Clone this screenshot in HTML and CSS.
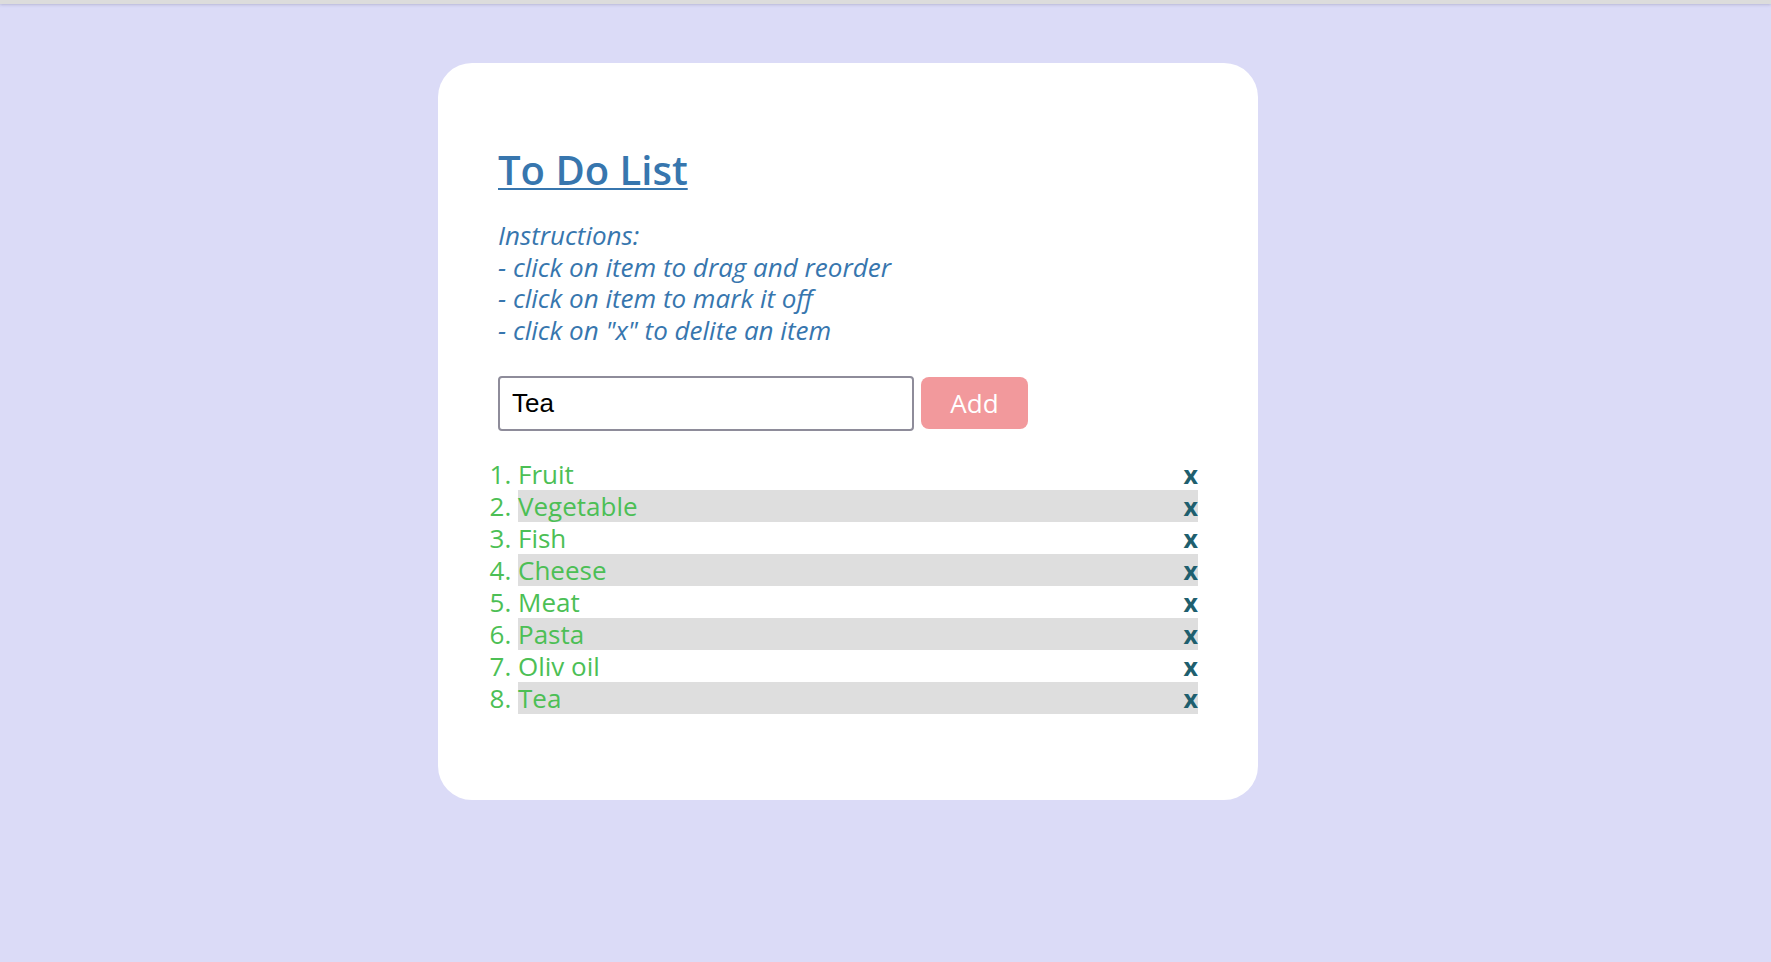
FILE: index.html
```html
<!DOCTYPE html>
<html lang="en">
<head>
<meta charset="utf-8">
<title>To Do List</title>
<link rel="stylesheet" href="styles.css">
</head>
<body>
<div class="topbar"></div>
<main class="card">
  <h1 class="title">To Do List</h1>
  <p class="instructions">Instructions:<br>- click on item to drag and reorder<br>- click on item to mark it off<br>- click on "x" to delite an item</p>
  <form class="add-form">
    <input class="add-input" type="text" value="Tea">
    <button class="add-btn" type="button">Add</button>
  </form>
  <ol class="todo">
    <li class="item">Fruit<span class="del">x</span></li>
    <li class="item">Vegetable<span class="del">x</span></li>
    <li class="item">Fish<span class="del">x</span></li>
    <li class="item">Cheese<span class="del">x</span></li>
    <li class="item">Meat<span class="del">x</span></li>
    <li class="item">Pasta<span class="del">x</span></li>
    <li class="item">Oliv oil<span class="del">x</span></li>
    <li class="item">Tea<span class="del">x</span></li>
  </ol>
</main>
</body>
</html>
```

FILE: styles.css
```css
html, body {
  margin: 0;
  padding: 0;
}
body {
  background: #dbdbf7;
  font-family: "Open Sans", "Liberation Sans", sans-serif;
  min-height: 962px;
}
.topbar {
  height: 4px;
  background: #dcdcdc;
  box-shadow: 0 1px 3px rgba(80, 80, 120, 0.25);
}
.card {
  box-sizing: border-box;
  width: 820px;
  margin: 59px 0 0 438px;
  padding: 81px 60px 86px 60px;
  background: #ffffff;
  border-radius: 34px;
}
.title {
  margin: 0;
  font-size: 40px;
  font-weight: 600;
  line-height: 52px;
  color: #3776ae;
  text-decoration: underline;
  text-decoration-thickness: 2px;
  text-underline-offset: 3px;
}
.instructions {
  margin: 24px 0 0 0;
  font-size: 26px;
  font-style: italic;
  font-weight: 500;
  line-height: 31.7px;
  color: #3776ae;
}
.add-form {
  display: flex;
  align-items: center;
  gap: 7px;
  margin-top: 29px;
}
.add-input {
  box-sizing: border-box;
  width: 416px;
  height: 55px;
  margin: 0;
  padding: 0 12px;
  border: 2px solid #8e8c9a;
  border-radius: 4px;
  font-family: "Liberation Sans", Arial, sans-serif;
  font-size: 26px;
  color: #000;
  outline: none;
}
.add-btn {
  box-sizing: border-box;
  width: 107px;
  height: 52px;
  margin: 0;
  padding: 0;
  border: none;
  border-radius: 8px;
  background: #f2999c;
  color: #ffffff;
  font-family: "Open Sans", sans-serif;
  font-size: 26px;
  font-weight: 500;
}
.todo {
  margin: 27px 0 0 0;
  padding: 0 0 0 20px;
  color: #4cbf55;
  font-size: 26px;
  font-weight: 500;
  line-height: 32px;
}
.item {
  display: list-item;
  list-style-position: outside;
}
.item:nth-child(even) {
  background: #dedede;
}
.del {
  float: right;
  color: #1f5f6e;
  font-weight: 700;
  font-size: 25px;
}
```
